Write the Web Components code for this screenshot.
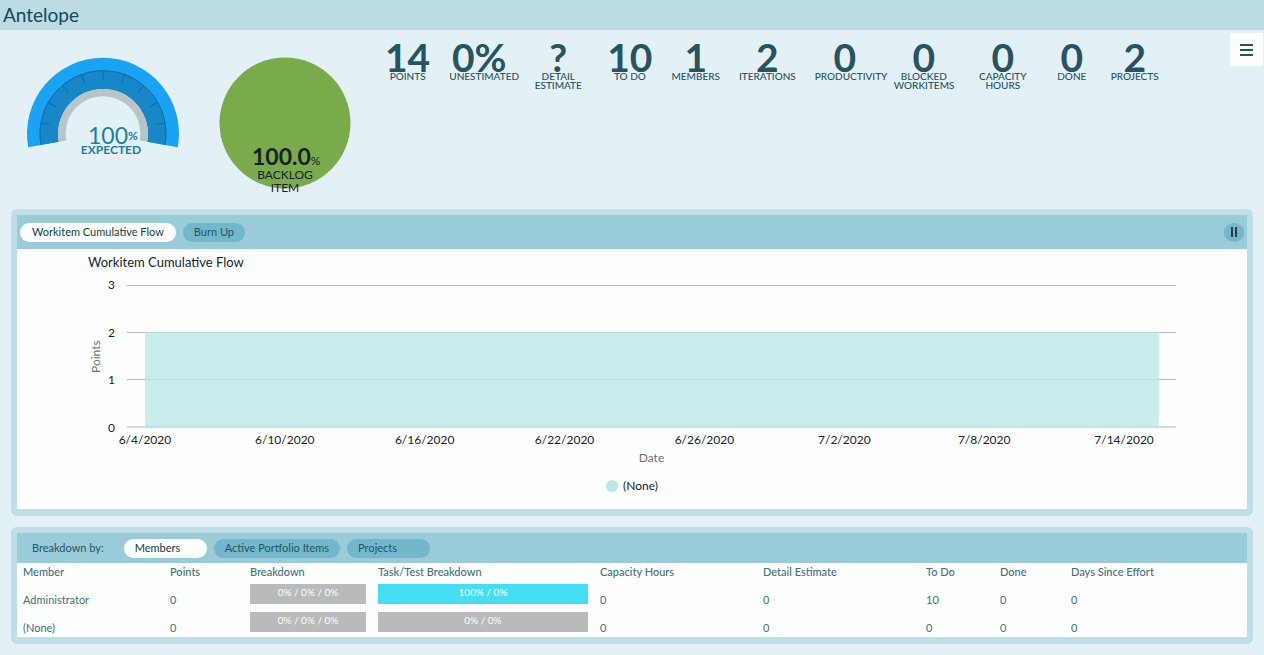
<!DOCTYPE html>
<html lang="en">
<head>
<meta charset="utf-8">
<meta name="viewport" content="width=device-width">
<title>Antelope</title>
<style>
html{background:#e3f0f5}
body{margin:0;font:12px/14px Lato,"Open Sans",sans-serif;color:#255561}
</style>
</head>
<body>
<team-room></team-room>
<script>
function define(name, html, setup) {
  const tpl = document.createElement('template');
  tpl.innerHTML = html;
  customElements.define(name, class extends HTMLElement {
    constructor() {
      super();
      this.attachShadow({mode: 'open'}).append(tpl.content.cloneNode(true));
    }
    connectedCallback() { if (setup) setup(this, this.shadowRoot); }
  });
}

define('room-header', `
<style>
:host{display:block;background:#bbdce4}
h1{margin:0;padding:0 3px;font-size:19px;line-height:30px;font-weight:400;color:#124a56}
</style><h1><slot></slot></h1>`);

define('progress-gauge', `
<style>
:host{display:block;width:160px}
svg{display:block;width:100%}
.value{font-size:23px;fill:#1c7fa3}
.unit{font-size:12px;font-weight:700}
.label{font-size:12px;font-weight:700;fill:#1c7fa3}
</style>
<svg viewBox="0 0 160 110" role="img" aria-label="100% expected">
<g transform="translate(80 84)">
<path fill="#18a3f4" d="M-74.8 13.2A76 76 0 1 1 74.8 13.2L44.3 7.8A45 45 0 1 0 -44.3 7.8Z"/>
<path fill="#1787c8" d="M-62.5 11A63.5 63.5 0 1 1 62.5 11L44.3 7.8A45 45 0 1 0 -44.3 7.8Z"/>
<path fill="none" stroke="#176b9c" d="M-62 10.9A63 63 0 1 1 62 10.9"/>
<path fill="#b9c4c7" d="M-44.3 7.8A45 45 0 1 1 44.3 7.8L36.9 6.5A37.5 37.5 0 1 0 -36.9 6.5Z"/>
<g id="ticks" stroke="#176b9c"></g>
</g>
<text class="value" x="65" y="94">100<tspan class="unit" dy="-4">%</tspan></text>
<text class="label" x="88" y="104" text-anchor="middle">EXPECTED</text>
</svg>`, (el, root) => {
  const ticks = root.getElementById('ticks');
  if (ticks.childNodes.length) return;
  for (let a = -80; a <= 80; a += 20) {
    const line = document.createElementNS('http://www.w3.org/2000/svg', 'path');
    line.setAttribute('d', 'M0 -63V-54');
    line.setAttribute('transform', `rotate(${a})`);
    ticks.append(line);
  }
});

define('share-pie', `
<style>
:host{display:block;width:132px}
svg{display:block;width:100%;overflow:visible}
text{font-size:12px;fill:#16222a}
.value{font-size:23px;font-weight:700}
</style>
<svg viewBox="0 0 132 142" role="img" aria-label="100.0% backlog item">
<circle cx="66" cy="66" r="65.5" fill="#7aab4b"/>
<text x="33" y="108"><tspan class="value">100.0</tspan>%</text>
<text x="66" y="122" text-anchor="middle">BACKLOG</text>
<text x="66" y="135" text-anchor="middle">ITEM</text>
</svg>`);

define('key-figure', `
<style>
:host{display:block;min-width:40px;max-width:60px;text-align:center;color:#255561}
b{display:block;margin-bottom:-4px;font-size:39px;line-height:38px}
span{display:block;font-size:10px;line-height:9px;font-weight:500}
</style><b></b><span><slot></slot></span>`, (el, root) => {
  root.querySelector('b').textContent = el.getAttribute('value');
});

define('menu-button', `
<style>
:host{display:block}
button{display:grid;place-items:center;width:33px;height:33px;padding:0;border:0;background:#fdfffe}
svg{display:block}
</style>
<button type="button" aria-label="Menu"><svg width="13" height="12" fill="#255561"><path d="M0 0h13v2H0zM0 5h13v2H0zM0 10h13v2H0z"/></svg></button>`);

define('pill-button', `
<style>
:host{display:block}
button{display:block;height:19px;padding:0 11px;border:0;border-radius:10px;background:#73b7cb;color:#255561;font:inherit;font-size:11px;line-height:18px;text-align:left;white-space:nowrap}
:host([wide]) button{min-width:83px}
:host([selected]) button{background:#fdfffe;color:#123c46}
:host([selected]:not([wide])) button{padding:0 12px}
</style><button type="button"><slot></slot></button>`);

define('pause-button', `
<style>
:host{display:block}
button{display:grid;place-items:center;width:20px;height:19px;padding:0;border:0;border-radius:10px;background:#73b7cb}
svg{display:block}
</style>
<button type="button" aria-label="Pause"><svg width="6" height="10"><path fill="#2d3b41" d="M0 0h2v10H0zM4 0h2v10H4z"/></svg></button>`);

define('room-panel', `
<style>
:host{display:block;margin:0 11px 11px;border:6px solid #c0dee5;border-bottom-width:7px;border-radius:6px;background:#fdfffe}
.bar{display:flex;align-items:center;gap:7px;min-height:34px;padding:0 3px;background:#9acbd9}
:host([compact]) .bar{min-height:30px;padding-left:15px}
</style>
<div class="bar"><slot name="bar"></slot></div><slot></slot>`);

define('flow-chart', `
<style>
:host{display:block;padding:3px 0 16px;color:#16222a}
h2{margin:0 0 13px 71px;font-size:13px;line-height:20px;font-weight:400}
.plot{display:grid;grid-template-columns:15px 12px 1fr;margin:0 71px}
.side{writing-mode:vertical-rl;transform:rotate(180deg);text-align:center;line-height:15px;color:#6b7173}
.ticks{display:flex;flex-direction:column;justify-content:space-between;margin:-7px 0;text-align:right}
svg{display:block;width:100%;height:143px}
.canvas{padding-left:12px}
.dates{display:flex;margin:5px 53px 0 58px}
.dates span{flex:1;text-align:center}
.axis{margin:4px 71px 0 110px;text-align:center;color:#6b7173}
.legend{display:flex;justify-content:center;align-items:center;gap:5px;margin-top:14px}
.legend i{width:12px;height:12px;border-radius:50%;background:#b9e6e6}
</style>
<h2>Workitem Cumulative Flow</h2>
<div class="plot">
<div class="side">Points</div>
<div class="ticks"><span>3</span><span>2</span><span>1</span><span>0</span></div>
<div class="canvas"><svg viewBox="0 0 1049 143" preserveAspectRatio="none" aria-hidden="true">
<path fill="#b8babb" d="M0 0h1049v1H0zM0 47h1049v1H0zM0 94h1049v1H0z"/>
<path fill="#d3dbe3" d="M0 141h1049v2H0z"/>
<path fill="#b9e6e6" fill-opacity=".78" d="M18 47H1032V142H18Z"/>
<path fill="#c9edec" d="M18 48H1032V141H18Z"/>
<path fill="#b8e3e3" d="M18 94h1014v1H18z"/>
</svg></div>
</div>
<div class="dates"><span>6/4/2020</span><span>6/10/2020</span><span>6/16/2020</span><span>6/22/2020</span><span>6/26/2020</span><span>7/2/2020</span><span>7/8/2020</span><span>7/14/2020</span></div>
<div class="axis">Date</div>
<div class="legend"><i></i><span>(None)</span></div>`);

define('member-table', `
<style>
:host{display:block;font-size:11px;color:#41707c}
table{width:100%;table-layout:fixed;border-collapse:collapse}
th,td{padding:0 6px;text-align:left;font-weight:400;white-space:nowrap}
th{height:18px;line-height:18px;font-weight:500}
td{height:26px;padding-bottom:2px;vertical-align:bottom}
td.meter{padding:3px 6px 5px;height:20px}
td.meter div{height:20px;font-size:10px;line-height:16px;text-align:center;color:#fdfffe;background:#b8babb}
td.meter .full{background:#45ddf1}
</style>
<table>
<colgroup><col style="width:147px"><col style="width:80px"><col style="width:128px"><col style="width:222px"><col style="width:163px"><col style="width:163px"><col style="width:74px"><col style="width:71px"><col style="width:182px"></colgroup>
<thead><tr><th>Member</th><th>Points</th><th>Breakdown</th><th>Task/Test Breakdown</th><th>Capacity Hours</th><th>Detail Estimate</th><th>To Do</th><th>Done</th><th>Days Since Effort</th></tr></thead>
<tbody>
<tr><td>Administrator</td><td>0</td><td class="meter"><div>0% / 0% / 0%</div></td><td class="meter"><div class="full">100% / 0%</div></td><td>0</td><td>0</td><td>10</td><td>0</td><td>0</td></tr>
<tr><td>(None)</td><td>0</td><td class="meter"><div>0% / 0% / 0%</div></td><td class="meter"><div>0% / 0%</div></td><td>0</td><td>0</td><td>0</td><td>0</td><td>0</td></tr>
</tbody>
</table>`);

define('team-room', `
<style>
:host{display:block}
.summary{display:flex;align-items:flex-start;min-height:179px}
progress-gauge{flex:none;margin:20px 0 0 23px}
share-pie{flex:none;margin:27px 0 0 36px}
.figures{display:flex;flex:1;gap:19px;margin:8px 0 0 34px}
menu-button{margin:3px 1px 0 0}
.by{margin-right:13px;font-size:11px}
pause-button{margin-left:auto}
</style>
<room-header>Antelope</room-header>
<section class="summary">
<progress-gauge></progress-gauge>
<share-pie></share-pie>
<div class="figures">
<key-figure value="14">POINTS</key-figure>
<key-figure value="0%">UNESTIMATED</key-figure>
<key-figure value="?">DETAIL ESTIMATE</key-figure>
<key-figure value="10">TO DO</key-figure>
<key-figure value="1">MEMBERS</key-figure>
<key-figure value="2">ITERATIONS</key-figure>
<key-figure value="0">PRODUCTIVITY</key-figure>
<key-figure value="0">BLOCKED WORKITEMS</key-figure>
<key-figure value="0">CAPACITY HOURS</key-figure>
<key-figure value="0">DONE</key-figure>
<key-figure value="2">PROJECTS</key-figure>
</div>
<menu-button></menu-button>
</section>
<room-panel>
<pill-button slot="bar" selected>Workitem Cumulative Flow</pill-button>
<pill-button slot="bar">Burn Up</pill-button>
<pause-button slot="bar"></pause-button>
<flow-chart></flow-chart>
</room-panel>
<room-panel compact>
<span slot="bar" class="by">Breakdown by:</span>
<pill-button slot="bar" wide selected>Members</pill-button>
<pill-button slot="bar">Active Portfolio Items</pill-button>
<pill-button slot="bar" wide>Projects</pill-button>
<member-table></member-table>
</room-panel>`);
</script>
</body>
</html>
